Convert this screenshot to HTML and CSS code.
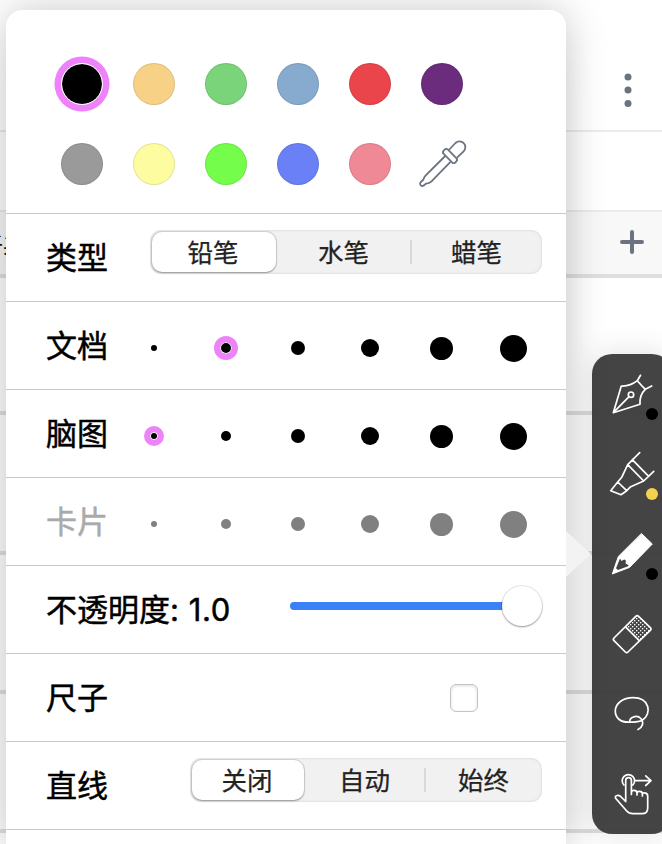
FILE: index.html
```html
<!DOCTYPE html>
<html lang="zh-CN">
<head>
<meta charset="utf-8">
<title>画笔设置</title>
<link rel="stylesheet" href="styles.css">
</head>
<body>
<div class="app">
  <header class="topbar">
    <svg class="more" viewBox="0 0 8 34"><circle cx="4" cy="4" r="3.5"/><circle cx="4" cy="17" r="3.5"/><circle cx="4" cy="30.5" r="3.5"/></svg>
  </header>
  <div class="subbar"></div>
  <div class="tabs">
    <span class="tab">新基</span>
    <svg class="plus" viewBox="0 0 24 24"><path d="M12 2v20M2 12h20"/></svg>
  </div>
  <div class="list">
    <div class="line"></div><div class="line"></div><div class="line"></div><div class="line"></div>
  </div>
</div>

<nav class="toolbar">
  <button class="tool"><svg viewBox="0 0 80 80"><path d="M21.3 58.7L29.3 32Q38 32.5 45.3 26.7Q49 31 53.3 35.3Q47.3 41 48 50.3L21.3 58.7L37.1 42.7M48.5 21.3L45.3 26.7M53.3 35.3L59.7 32"/><circle cx="39" cy="40.7" r="2.7"/></svg><i class="ink black"></i></button>
  <button class="tool"><svg viewBox="0 0 80 80"><path d="M47.7 18.7L35.7 30.7L29.7 43.3L25.7 48L18.7 56.7L29 60.7L34.7 56.7L38.7 52.7L51.7 47L61.7 37.3M40.3 25.7L56.7 42.3M35.7 30.7L51.7 47M25.7 48L34.7 56.7"/></svg><i class="ink yellow"></i></button>
  <button class="tool"><svg viewBox="0 0 80 80"><path class="solid" d="M49.7 19.7L60.3 30L37.7 53.3L20.3 60L26.3 42.7Z"/><path class="lead" d="M28 44.5L29.5 47L32.2 45.5L33.8 46.3L33.6 49.5L36.7 51.2L36 52.2L26 56L24 54.3Z"/></svg><i class="ink black"></i></button>
  <button class="tool"><svg viewBox="0 0 80 80"><defs><pattern id="grain" width="4" height="4" patternUnits="userSpaceOnUse"><rect width="1.35" height="1.35"/><rect x="2" y="2" width="1.35" height="1.35"/></pattern></defs><path class="grain" d="M45.2 21.3L59.3 35L47.3 46.7L34 33.3Z"/><path d="M43.8 22.3L22 44Q20.7 45.3 22 46.7L33.3 58Q34.7 59.4 36 58L58.3 36.3Q59.8 35 58.3 33.5L46.6 22.3Q45.2 20.9 43.8 22.3ZM34 33.3L47.3 46.7"/></svg></button>
  <button class="tool"><svg viewBox="0 0 80 80"><path d="M50.5 46C60 40 58 23.7 41 23.7C31 23.7 23.3 29.5 23.3 37C23.3 44 28.5 48.2 36.5 48.2C43 48.2 48 48 50.5 46M37.8 48C37 44 44.5 40 48.8 44.5C52.3 48.5 50.5 53.5 46 55.5"/></svg></button>
  <button class="tool"><svg viewBox="0 0 80 80"><path d="M31.9 31A6.2 6.2 0 1 1 40.9 31M43.3 26.7H59M53.7 21.8L59 26.7L53.7 31.5M33.7 47.5V26.5A2.85 2.85 0 0 1 39.4 26.5V40.5V38.5Q39.4 36.4 42 36.4Q45 36.4 45 39V41V39Q45 37.4 47.3 37.4Q50.4 37.4 50.4 40V42V40.3Q50.4 38.6 52.6 38.8Q55.7 39 55.7 42V54Q55.7 59.7 50 59.7H41Q37 59.7 34.5 56.8L23.6 44.2Q22.8 42 25 41.5Q26.8 40.9 28.5 42.4L33.7 47.5"/></svg></button>
</nav>

<section class="panel">
  <div class="arrow"></div>
  <div class="palette">
    <i class="color c1 chosen"></i><i class="color c2"></i><i class="color c3"></i><i class="color c4"></i><i class="color c5"></i><i class="color c6"></i>
    <i class="color c7"></i><i class="color c8"></i><i class="color c9"></i><i class="color c10"></i><i class="color c11"></i>
    <svg class="dropper" viewBox="0 0 72 80"><path d="M38.7 32.5L19.5 51.7Q18 53.3 17.4 55.5L14.3 58.7Q13.6 60 14.8 61.3Q16 62.4 17.3 61.7L20 59.7Q23.5 59.3 25.5 57.3L44 38.3M43.3 25.5L49.5 19A5.6 5.6 0 0 1 57.6 27.3L51.3 33.3"/><rect x="35.7" y="29" width="16.6" height="6" rx="2.4" transform="rotate(45 44 32)"/></svg>
  </div>
  <div class="row">
    <span class="label">类型</span>
    <div class="segments kind"><span class="seg on">铅笔</span><span class="seg">水笔</span><span class="seg split">蜡笔</span></div>
  </div>
  <div class="row">
    <span class="label">文档</span>
    <div class="sizes"><i class="dot s1"></i><i class="dot s2 picked"></i><i class="dot s3"></i><i class="dot s4"></i><i class="dot s5"></i><i class="dot s6"></i></div>
  </div>
  <div class="row">
    <span class="label">脑图</span>
    <div class="sizes"><i class="dot s1 picked"></i><i class="dot s2"></i><i class="dot s3"></i><i class="dot s4"></i><i class="dot s5"></i><i class="dot s6"></i></div>
  </div>
  <div class="row disabled">
    <span class="label">卡片</span>
    <div class="sizes"><i class="dot s1"></i><i class="dot s2"></i><i class="dot s3"></i><i class="dot s4"></i><i class="dot s5"></i><i class="dot s6"></i></div>
  </div>
  <div class="row">
    <span class="label">不透明度<span class="value">: 1.0</span></span>
    <div class="slider"><div class="track"></div><div class="thumb"></div></div>
  </div>
  <div class="row">
    <span class="label">尺子</span>
    <span class="check"></span>
  </div>
  <div class="row">
    <span class="label">直线</span>
    <div class="segments straight"><span class="seg on">关闭</span><span class="seg">自动</span><span class="seg split">始终</span></div>
  </div>
  <div class="row last"></div>
</section>
</body>
</html>
```
FILE: styles.css
```css
* { box-sizing: border-box; }
html, body { height: 100%; }
body {
  margin: 0;
  position: relative;
  overflow: hidden;
  background: #fff;
  font-family: Inter, "Noto Sans CJK SC", sans-serif;
}

/* page behind the popover */
.app { height: 844px; overflow: hidden; }
.topbar { height: 132px; border-bottom: 2px solid #ebebeb; display: flex; justify-content: flex-end; padding: 73px 30px 0 0; }
.more { width: 8px; height: 34px; fill: #6b7280; }
.subbar { height: 80px; border-bottom: 2px solid #ebebeb; }
.tabs { height: 66px; background: #f8f8f8; border-bottom: 4px solid #dfdfdf; display: flex; justify-content: space-between; align-items: center; padding-right: 18px; }
.tab { font-size: 26px; line-height: 40px; color: #111; margin: 10px 0 0 -23px; }
.plus { width: 24px; height: 24px; margin-top: -2px; fill: none; stroke: #6b7280; stroke-width: 4; stroke-linecap: round; }
.line { height: 139.3px; border-bottom: 4px solid #dfdfdf; }
.list { margin-top: -2px; }

/* tool strip */
.toolbar {
  position: absolute;
  left: 592px;
  top: 354px;
  width: 80px;
  height: 480px;
  border-radius: 20px;
  background: rgba(62, 62, 62, .97);
  box-shadow: 0 0 32px rgba(0, 0, 0, .12);
  display: flex;
  flex-direction: column;
}
.tool { position: relative; display: block; width: 80px; height: 80px; padding: 0; border: 0; background: none; }
.tool svg { display: block; width: 80px; height: 80px; fill: none; stroke: #fff; stroke-width: 1.7; stroke-linejoin: round; stroke-linecap: round; }
.tool .solid { fill: #fff; stroke: #fff; stroke-width: 1; }
.tool .lead { fill: #444; stroke: none; }
.tool .grain { fill: url(#grain); stroke: none; }
.tool pattern rect { fill: #fff; stroke: none; }
.ink { position: absolute; left: 54px; top: 54px; width: 12px; height: 12px; border-radius: 50%; }
.black { background: #000; }
.yellow { background: #f6d04f; }

/* popover */
.panel {
  position: absolute;
  left: 6px;
  top: 10px;
  width: 560px;
  height: 834px;
  border-radius: 16px 16px 0 0;
  background: #fff;
  box-shadow: 0 0 40px rgba(0, 0, 0, .22), 0 40px 40px rgba(0, 0, 0, .04);
}
.arrow {
  position: absolute;
  left: 560px;
  top: 521px;
  width: 25px;
  height: 46px;
  background: #f3f3f3;
  clip-path: polygon(0 0, 100% 50%, 0 100%);
}
.palette {
  display: grid;
  grid-template-columns: repeat(6, 72px);
  grid-template-rows: repeat(2, 80px);
  place-items: center;
  padding: 34px 0 0 40px;
  height: 203px;
  align-content: start;
}
.color { width: 42px; height: 42px; border-radius: 50%; border: 1px solid rgba(0, 0, 0, .1); }
.chosen { box-shadow: 0 0 0 6.5px #ee82fa; border-color: #fff; background-clip: padding-box; }
.c1 { background-color: #000; }
.c2 { background: #f7d286; }
.c3 { background: #7ad479; }
.c4 { background: #87aacf; }
.c5 { background: #ea454b; }
.c6 { background: #6b2c7e; }
.c7 { background: #9a9a9a; }
.c8 { background: #fdfca0; }
.c9 { background: #75fd4b; }
.c10 { background: #6a80f6; }
.c11 { background: #ef8996; }
.dropper { width: 72px; height: 80px; fill: none; stroke: #6b7280; stroke-width: 1.8; stroke-linejoin: round; stroke-linecap: round; }

.row { height: 88px; border-top: 1px solid #c8c8c8; display: flex; align-items: center; justify-content: space-between; padding: 0 24px 0 40px; }
.last { height: 15px; }
.label { font-size: 31px; line-height: 44px; font-weight: 400; color: #000; -webkit-text-stroke: .5px currentColor; white-space: nowrap; }
.value { letter-spacing: .6px; }
.disabled .label { color: #aaa; }

.segments { display: grid; height: 44px; margin-top: -12px; border-radius: 11px; background: #f1f1f1; box-shadow: inset 0 0 2px 1px rgba(0, 0, 0, .07); align-items: center; }
.kind { grid-template-columns: 126px 134px 132px; }
.straight { grid-template-columns: 114px 120px 118px; }
.seg { font-size: 25.5px; line-height: 41px; height: 40px; text-align: center; color: #222; -webkit-text-stroke: .25px currentColor; }
.seg + .seg { padding-left: 1px; }
.on { margin-left: 2px; padding-right: 2px; border-radius: 10px; background: #fff; box-shadow: 0 0 0 1px rgba(0, 0, 0, .1), 0 1px 2px rgba(0, 0, 0, .3); }
.split { background: linear-gradient(#d9d9d9, #d9d9d9) 0 8px / 2px 24px no-repeat; }

.sizes { display: grid; grid-template-columns: repeat(6, 72px); grid-template-rows: 28px; place-items: center; margin-right: -8px; margin-top: 5px; }
.dot { border-radius: 50%; background: #000; }
.disabled .dot { background: #808080; }
.s1 { width: 6px; height: 6px; }
.s2 { width: 10px; height: 10px; }
.s3 { width: 14px; height: 14px; }
.s4 { width: 18px; height: 18px; }
.s5 { width: 23px; height: 23px; margin-right: 1px; }
.s6 { width: 27px; height: 27px; margin-right: 1px; }
.picked { border: 6px solid #ee82fa; background-clip: padding-box; box-shadow: inset 0 0 0 1px #fff; }
.s1.picked { width: 20px; height: 20px; }
.s2.picked { width: 24px; height: 24px; }

.slider { display: flex; align-items: center; margin-top: -7px; }
.track { width: 222px; height: 8px; border-radius: 4px; background: #3a80f7; margin-right: -10px; }
.thumb { width: 40px; height: 40px; border-radius: 50%; background: #fff; box-shadow: 0 0 0 1px rgba(0, 0, 0, .08), 0 1px 2px rgba(0, 0, 0, .35); }
.check { width: 28px; height: 28px; margin-right: 64px; border: 1px solid #c4c4c4; border-radius: 6px; box-shadow: inset 0 1px 3px rgba(0, 0, 0, .14); }
```
